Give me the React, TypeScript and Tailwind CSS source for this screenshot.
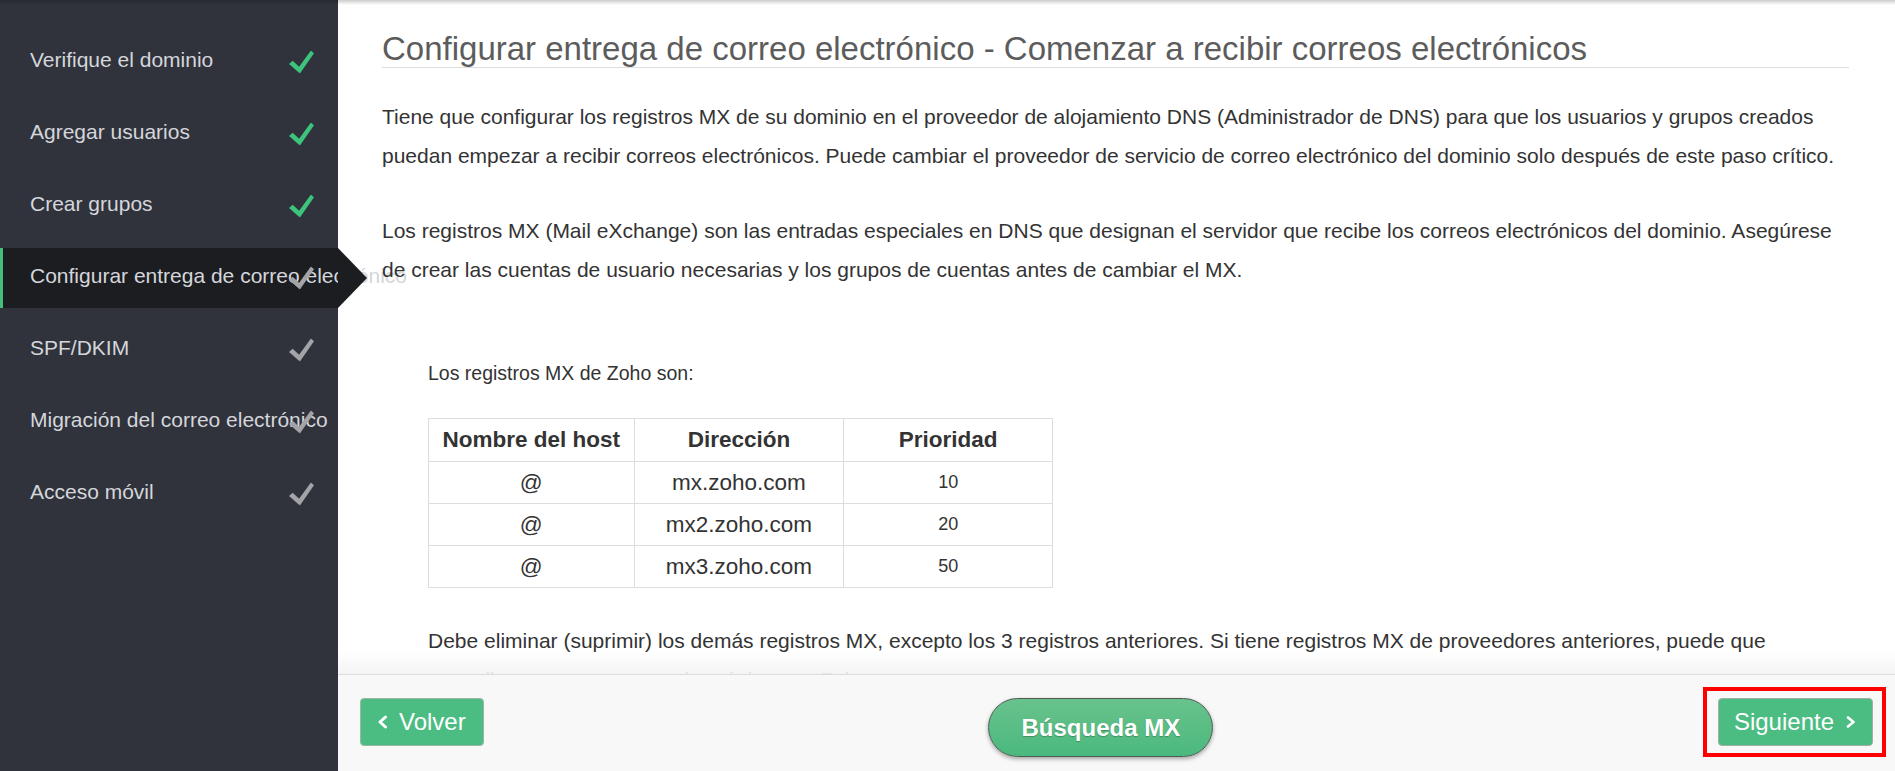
import React from "react"

const pasos = [
    { nombre: "Verifique el dominio", hecho: true, activo: false },
    { nombre: "Agregar usuarios", hecho: true, activo: false },
    { nombre: "Crear grupos", hecho: true, activo: false },
    { nombre: "Configurar entrega de correo electrónico", hecho: false, activo: true },
    { nombre: "SPF/DKIM", hecho: false, activo: false },
    { nombre: "Migración del correo electrónico", hecho: false, activo: false },
    { nombre: "Acceso móvil", hecho: false, activo: false },
]

const registros = [
    { host: "@", dir: "mx.zoho.com", prio: "10" },
    { host: "@", dir: "mx2.zoho.com", prio: "20" },
    { host: "@", dir: "mx3.zoho.com", prio: "50" },
]

function Check({ verde }: { verde: boolean }) {
    return (
        <svg width="25" height="23" viewBox="0 0 25 23" className={verde ? "fill-[#3dc47c]" : "fill-[#a3a4a7]"}>
            <path d="M0 13.4 L3.7 10.2 L10.1 16.2 L21.9 0 L25 2.7 L10.9 23 Z" />
        </svg>
    )
}

function ChevronIzq() {
    return (
        <svg width="11" height="14" viewBox="0 0 11 14" fill="none" stroke="white" strokeWidth="3" strokeLinecap="round" strokeLinejoin="round">
            <path d="M8.5 2 L3 7 L8.5 12" />
        </svg>
    )
}

function ChevronDer() {
    return (
        <svg width="10" height="12" viewBox="0 0 10 12" fill="none" stroke="white" strokeWidth="2.6" strokeLinecap="round" strokeLinejoin="round">
            <path d="M2 1.5 L7.5 6 L2 10.5" />
        </svg>
    )
}

export default function App() {
    return (
        <div
            className="relative flex h-[771px] w-full overflow-hidden bg-white"
            style={{ fontFamily: '"Liberation Sans", Arial, sans-serif' }}
        >
            {/* sombra superior */}
            <div className="pointer-events-none absolute inset-x-0 top-0 z-20 h-[5px] bg-linear-to-b from-black/20 to-transparent" />

            {/* Barra lateral */}
            <aside className="relative w-[338px] shrink-0 bg-[#30333b] pt-[32px]">
                <ul className="flex flex-col gap-[12px]">
                    {pasos.map(p => (
                        <li
                            key={p.nombre}
                            className={`relative flex h-[60px] items-center whitespace-nowrap pb-[5px] text-[21px] text-[#d4d6db] ${
                                p.activo ? "border-l-[3px] border-[#45bd7d] bg-[#1c1d21] pl-[27px]" : "pl-[30px]"
                            }`}
                        >
                            <span>{p.nombre}</span>
                            {p.activo && (
                                <div className="absolute top-0 left-[335px] h-0 w-0 border-y-[30px] border-l-[29px] border-y-transparent border-l-[#1c1d21]" />
                            )}
                            <div className="absolute top-1/2 right-[24px] -translate-y-1/2">
                                <Check verde={p.hecho} />
                            </div>
                        </li>
                    ))}
                </ul>
            </aside>

            {/* Contenido */}
            <main className="relative z-10 flex min-w-0 flex-1 flex-col">
                <div className="flex-1 overflow-hidden pt-[30px] pr-[46px] pl-[44px] text-[#333]">
                    <h1 className="border-b border-[#ddd] text-[33px] leading-[37px] text-[#5c5c5c]">
                        Configurar entrega de correo electrónico - Comenzar a recibir correos electrónicos
                    </h1>

                    <p className="mt-[29px] text-[21px] leading-[39px]">
                        Tiene que configurar los registros MX de su dominio en el proveedor de alojamiento DNS (Administrador de DNS) para que los usuarios y grupos creados puedan empezar a recibir correos electrónicos. Puede cambiar el proveedor de servicio de correo electrónico del dominio solo después de este paso crítico.
                    </p>

                    <p className="mt-[36px] text-[21px] leading-[39px]">
                        Los registros MX (Mail eXchange) son las entradas especiales en DNS que designan el servidor que recibe los correos electrónicos del dominio. Asegúrese de crear las cuentas de usuario necesarias y los grupos de cuentas antes de cambiar el MX.
                    </p>

                    <div className="mt-[65px] pl-[46px]">
                        <p className="text-[19.5px] leading-[39px]">Los registros MX de Zoho son:</p>

                        <table className="mt-[25px] w-[625px] border-collapse text-center">
                            <thead>
                                <tr className="h-[43px] text-[22.5px] font-bold">
                                    <th className="w-[206px] border border-[#ddd]">Nombre del host</th>
                                    <th className="w-[210px] border border-[#ddd]">Dirección</th>
                                    <th className="w-[209px] border border-[#ddd]">Prioridad</th>
                                </tr>
                            </thead>
                            <tbody>
                                {registros.map(r => (
                                    <tr key={r.dir} className="h-[42px]">
                                        <td className="border border-[#ddd] text-[22.5px]">{r.host}</td>
                                        <td className="border border-[#ddd] text-[22.5px]">{r.dir}</td>
                                        <td className="border border-[#ddd] text-[18px]">{r.prio}</td>
                                    </tr>
                                ))}
                            </tbody>
                        </table>

                        <p className="mt-[33px] text-[21px] leading-[39px]">
                            Debe eliminar (suprimir) los demás registros MX, excepto los 3 registros anteriores. Si tiene registros MX de proveedores anteriores, puede que
                            <br />
                            ya no lleguen sus correos electrónicos en Zoho.
                        </p>
                    </div>
                </div>

                {/* Pie */}
                <div className="relative flex h-[97px] shrink-0 items-start justify-between border-t border-[#dcdcdc] bg-[#f8f8f8] px-[22px] pt-[23px]">
                    <div className="pointer-events-none absolute inset-x-0 -top-[24px] h-[23px] bg-linear-to-b from-white/0 to-[#f4f4f4]/95" />

                    <button className="flex h-[48px] items-center gap-[11px] rounded-[4px] border border-[#98b7a5] bg-[#4bbd82] pr-[17px] pl-[16px] text-[24px] text-white">
                        <ChevronIzq />
                        <span>Volver</span>
                    </button>

                    <button className="h-[59px] rounded-full border border-[#4f5a53] bg-linear-to-b from-[#68c28c] to-[#4ab97d] px-[32px] text-[24px] font-bold text-white shadow-[0_2px_4px_rgba(0,0,0,0.35)] [text-shadow:0_1px_1px_rgba(0,0,0,0.25)]">
                        Búsqueda MX
                    </button>

                    <div className="relative">
                        <div className="pointer-events-none absolute -top-[11px] -right-[13px] -bottom-[11px] -left-[15px] border-4 border-[#f00]" />
                        <button className="flex h-[48px] items-center gap-[12px] rounded-[4px] border border-[#9fb0a6] bg-[#4bbd82] pr-[16px] pl-[15px] text-[24px] text-white">
                            <span>Siguiente</span>
                            <ChevronDer />
                        </button>
                    </div>
                </div>
            </main>
        </div>
    )
}
